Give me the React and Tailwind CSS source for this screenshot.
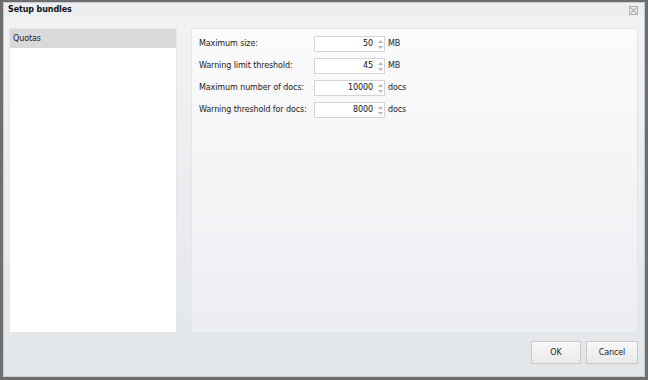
import React from "react";

const rows = [
  { label: "Maximum size:", value: "50", unit: "MB" },
  { label: "Warning limit threshold:", value: "45", unit: "MB" },
  { label: "Maximum number of docs:", value: "10000", unit: "docs" },
  { label: "Warning threshold for docs:", value: "8000", unit: "docs" },
];

function Spinner() {
  return (
    <div className="flex w-[8px] flex-col items-center justify-center gap-[3px]">
      <svg width="5" height="3" viewBox="0 0 5 3">
        <path d="M0 3 L2.5 0 L5 3 Z" fill="#b8b8b8" />
      </svg>
      <svg width="5" height="3" viewBox="0 0 5 3">
        <path d="M0 0 L2.5 3 L5 0 Z" fill="#b8b8b8" />
      </svg>
    </div>
  );
}

export default function App() {
  return (
    <div
      className="h-[380px] w-[648px] bg-[#6e6e6e] pl-[3px] pr-[3px] pt-[2px] pb-[3px] text-[#222] tracking-[-0.1px]"
      style={{ fontFamily: '"DejaVu Sans", Verdana, sans-serif' }}
    >
      <div className="flex h-full flex-col border border-[#c9ced4] bg-gradient-to-b from-[#f2f3f5] to-[#e3e6e9]">
        <div className="flex h-[14px] items-center justify-between bg-[#eceef0] pl-[4px] pr-[6px]">
          <span className="text-[8px] font-bold leading-none text-[#111]">Setup bundles</span>
          <svg width="9" height="9" viewBox="0 0 9 9">
            <rect x="0.5" y="0.5" width="8" height="8" fill="none" stroke="#b0b0b0" />
            <path d="M1.5 1.5 L7.5 7.5 M7.5 1.5 L1.5 7.5" stroke="#b0b0b0" strokeWidth="1.2" />
          </svg>
        </div>
        <div className="flex flex-1 gap-[14px] pl-[5px] pr-[6px] pt-[11px]">
          <div className="flex h-[305px] w-[168px] flex-col border border-[#e6e6e6] bg-white">
            <div className="flex h-[19px] items-center bg-[#d9d9d9] pl-[3px] text-[8px] text-[#222]">Quotas</div>
          </div>
          <div className="h-[305px] flex-1 rounded-[2px] border border-[#e3e5e8] bg-gradient-to-b from-[#fbfbfc] to-[#eceef1] pl-[7px] pt-[7px]">
            <div className="flex flex-col gap-[6px]">
              {rows.map((r) => (
                <div key={r.label} className="flex h-[16px] items-center">
                  <span className="w-[115px] whitespace-nowrap text-[8px] text-[#222]">{r.label}</span>
                  <div className="flex h-[16px] w-[71px] items-center border border-[#d4d4d4] bg-white">
                    <span className="flex-1 pr-[3px] text-right text-[8px] text-[#111]">{r.value}</span>
                    <Spinner />
                  </div>
                  <span className="pl-[3px] text-[8px] text-[#222]">{r.unit}</span>
                </div>
              ))}
            </div>
          </div>
        </div>
        <div className="flex justify-end gap-[5px] pb-[12px] pr-[6px] pt-[8px]">
          <button className="h-[23px] w-[50px] border border-[#c8c8c8] bg-gradient-to-b from-[#f8f8f8] to-[#e9e9e9] text-[8px] text-[#222]">
            OK
          </button>
          <button className="h-[23px] w-[52px] border border-[#c8c8c8] bg-gradient-to-b from-[#f8f8f8] to-[#e9e9e9] text-[8px] text-[#222]">
            Cancel
          </button>
        </div>
      </div>
    </div>
  );
}
